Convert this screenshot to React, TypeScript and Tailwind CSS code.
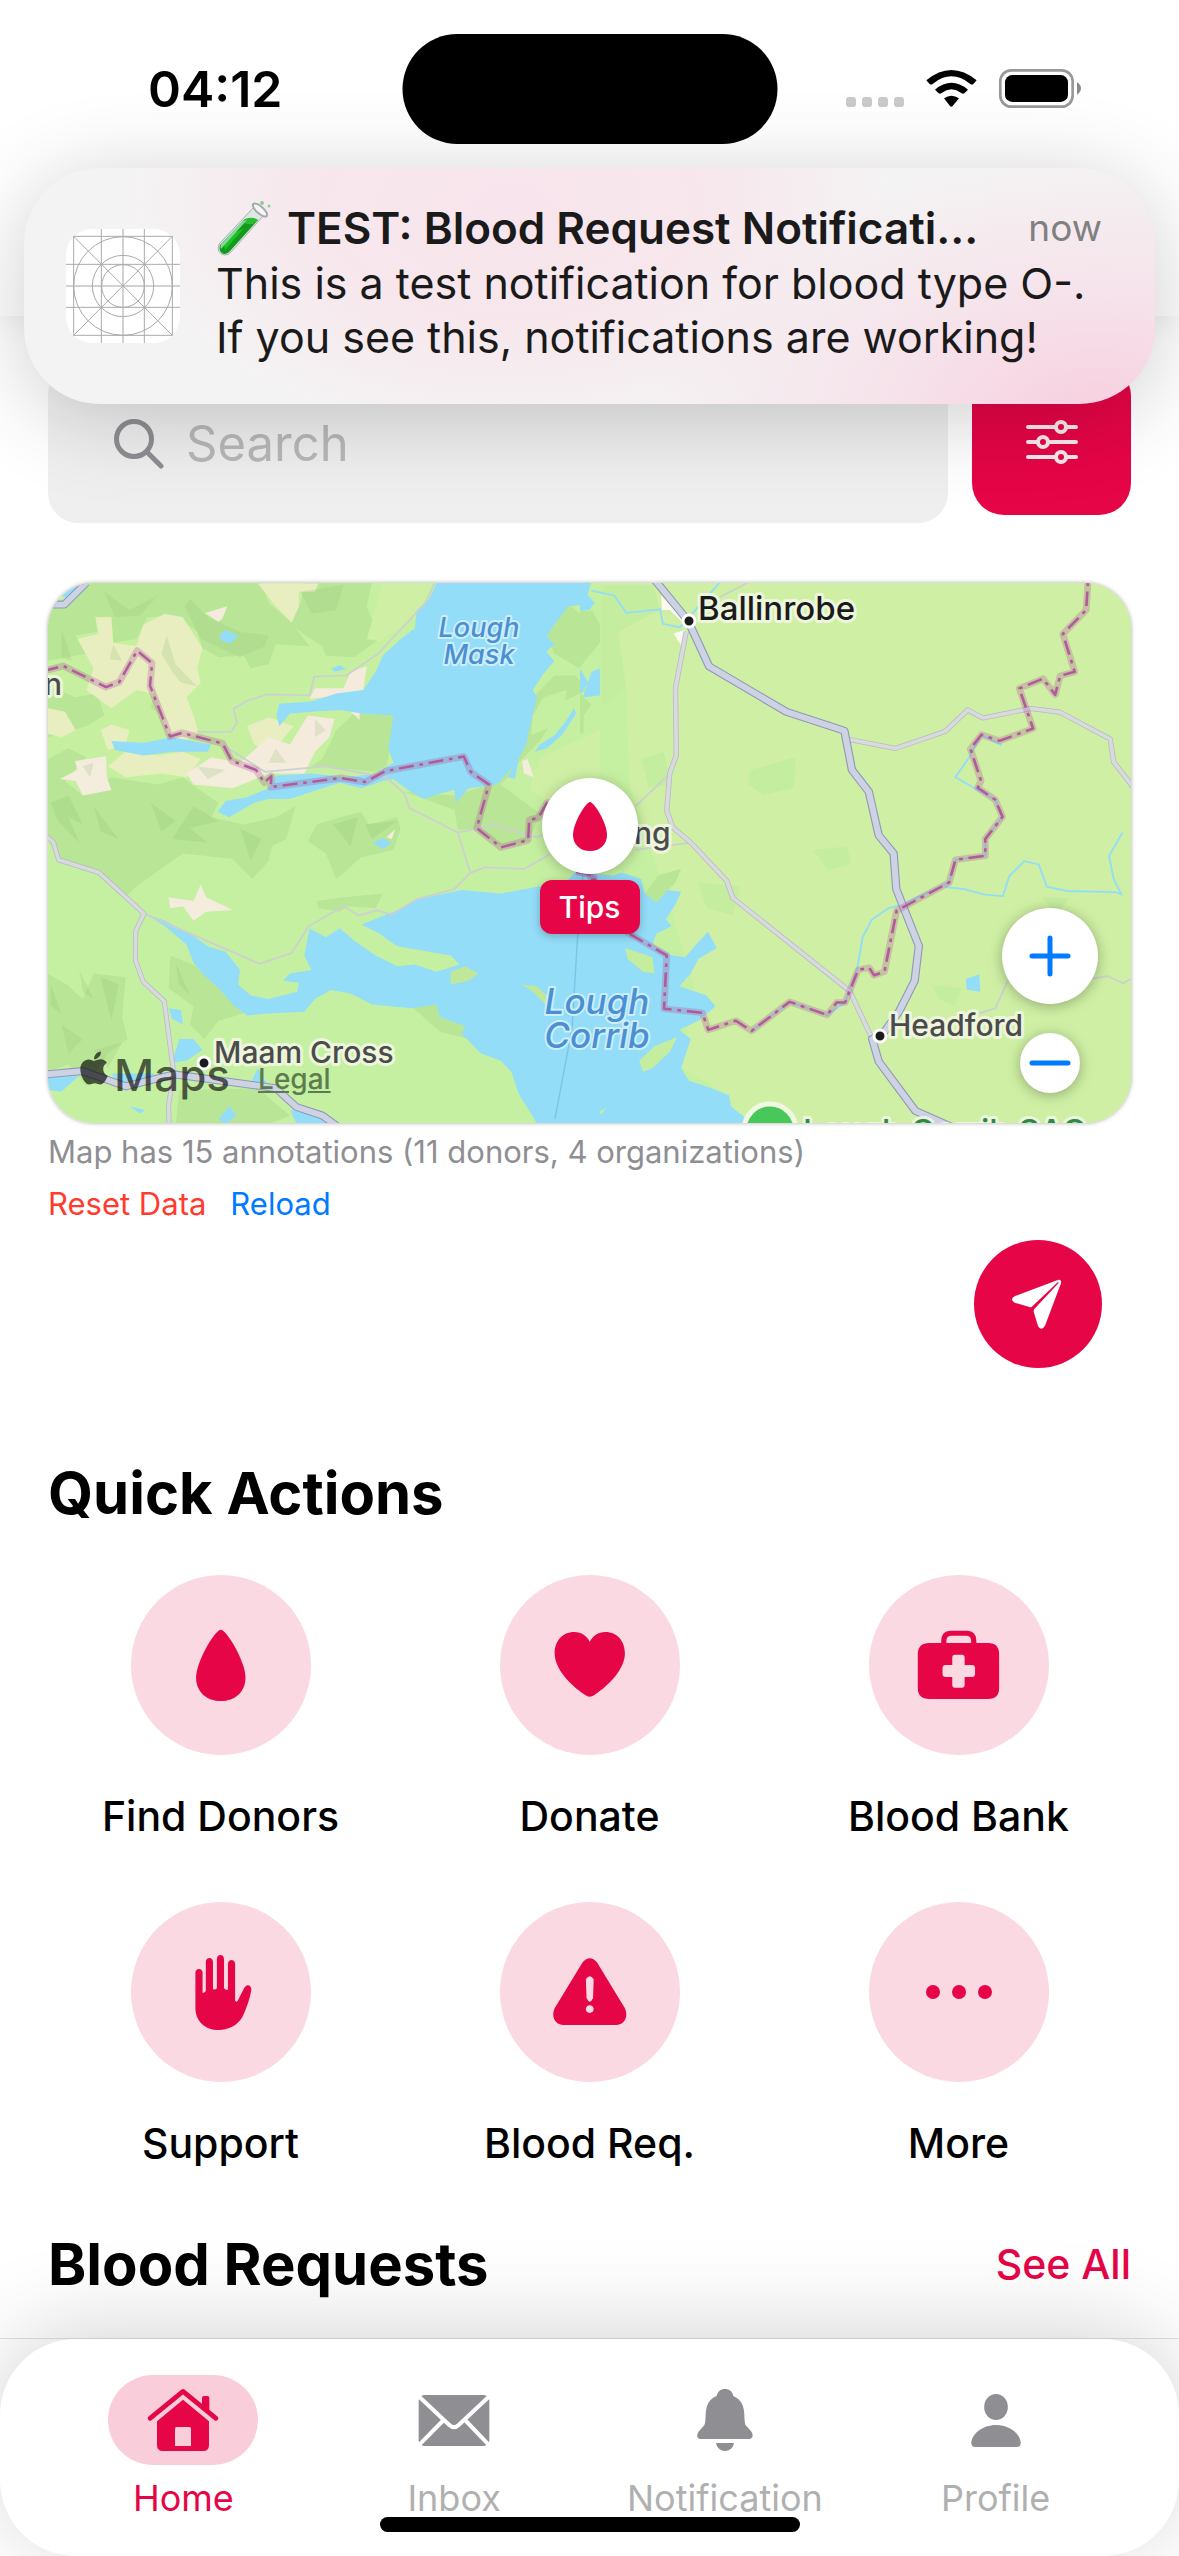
import React from "react";
import { FaApple } from "react-icons/fa";

const BRAND = "#e60547";
const GRAY = "#8e8e93";

function StatusBar() {
  return (
    <div className="relative flex h-[177px] items-center justify-between pr-[97px] pl-[148px]">
      <span className="text-[50px] leading-none font-semibold text-black">04:12</span>
      <div className="absolute top-[34px] left-1/2 h-[110px] w-[375px] -translate-x-1/2 rounded-full bg-black" />
      <svg width="236" height="40" viewBox="846 68 236 40" aria-label="Wi-Fi and battery">
        <g fill="#cacaca">
          <rect x="846" y="96" width="10" height="10" rx="3" />
          <rect x="862" y="96" width="10" height="10" rx="3" />
          <rect x="878" y="96" width="10" height="10" rx="3" />
          <rect x="894" y="96" width="10" height="10" rx="3" />
        </g>
        <g transform="translate(830 55) scale(.3333)">
          <path d="M289 73Q364 11 440 73L430 84Q426 88 420 83Q364 39 309 83Q303 88 299 84Z" />
          <path d="M315 101Q364 60 414 101L404 111Q399 115 394 111Q364 89 335 111Q330 115 325 111Z" />
          <path d="M342 127Q364 112 387 127L368 150Q364 154 360 150Z" />
          <rect x="511" y="43" width="217" height="109" rx="33" fill="none" stroke="#999" strokeWidth="8" />
          <rect x="525" y="57" width="189" height="81" rx="22" />
          <path d="M741 78Q753 86 753 97T741 116Z" fill="#8a8a8a" />
        </g>
      </svg>
    </div>
  );
}

function TestTube() {
  return (
    <svg className="shrink-0" width="55" height="56" viewBox="0 0 55 56" aria-label="Test tube">
      <path d="M39 6L3 44Q0 53 8 55Q12 56 16 51L48 15Z" fill="#dfe7e4" stroke="#a8b2ae" />
      <path d="M29 19L4 45Q2 52 8 54Q12 54 15 50L42 20Z" fill="#139a1d" />
      <path d="M29 19Q37 16 42 20L37 24Q31 25 26 22Z" fill="#2dbb32" />
      <path d="M17 34L8 45L9 50L28 28Z" fill="#19c320" />
      <path d="M27 21L5 44Q4 47 5 49L31 20Z" fill="#8ad39a" />
      <ellipse cx="44" cy="10" rx="9" ry="3.5" transform="rotate(42 44 10)" fill="#f5f7f6" stroke="#a3abab" strokeWidth="2" />
      <circle cx="46" cy="3" r="2" fill="#8ad18f" />
      <circle cx="53" cy="6" r="1.5" fill="#8ad18f" />
    </svg>
  );
}

function AppIcon() {
  return (
    <svg className="shrink-0" width="114" height="114" viewBox="198 207 342 342" aria-hidden="true">
      <rect x="198" y="207" width="342" height="342" rx="78" fill="#fff" />
      <g fill="none" stroke="#d2d2d2" strokeWidth="6">
        <path d="M369 207V549M198 378H540" />
      </g>
      <g fill="none" stroke="#aaa" strokeWidth="3">
        <path d="M304 207V549M433 207V549M198 313H540M198 442H540" />
        <path d="M221 229H517V526H221ZL517 526M517 229L221 526" />
        <circle cx="369" cy="378" r="148" />
        <circle cx="369" cy="378" r="92" />
        <circle cx="369" cy="378" r="64" />
      </g>
    </svg>
  );
}

function NotificationBanner() {
  return (
    <section
      aria-label="Notification"
      className="absolute inset-x-6 top-[168px] z-20 flex h-[236px] items-center rounded-[76px] bg-[#f4f3f4] bg-[radial-gradient(ellipse_34%_100%_at_43%_15%,#f8e4ec_0%,#f7e7ed_50%,transparent_100%),radial-gradient(ellipse_40%_110%_at_95%_105%,#f8cfe0_0%,#f6e2ea_45%,transparent_100%)] pr-[53px] pl-[42px] shadow-[0_12px_90px_rgba(0,0,0,0.2)]"
    >
      <AppIcon />
      <div className="ml-9 min-w-0 flex-1 pb-2 text-[43px] leading-[54px] text-[#1a1a1a]">
        <div className="flex items-center">
          <TestTube />
          <h2 className="ml-4 min-w-0 truncate text-[44px] font-semibold">TEST: Blood Request Notificati...</h2>
          <span className="ml-auto pl-4 text-[37px] text-[#808080]">now</span>
        </div>
        <p className="whitespace-nowrap">This is a test notification for blood type O-.</p>
        <p className="whitespace-nowrap">If you see this, notifications are working!</p>
      </div>
    </section>
  );
}

function SearchRow() {
  return (
    <div className="flex gap-6">
      <label className="flex h-[159px] flex-1 items-center rounded-[30px] bg-[#efefef] pl-[66px]">
        <svg className="shrink-0" width="50" height="50" viewBox="0 0 50 50" fill="none" stroke={GRAY} strokeWidth="5" strokeLinecap="round" aria-hidden="true">
          <circle cx="20" cy="20" r="17.5" />
          <path d="M33 33L47 47" />
        </svg>
        <input
          type="search"
          aria-label="Search"
          placeholder="Search"
          className="ml-[22px] w-full min-w-0 bg-transparent text-[49px] outline-none placeholder:text-[#b8b8ba]"
        />
      </label>
      <button aria-label="Filters" className="flex h-[151px] w-[159px] items-center justify-center rounded-[32px] bg-[#e60547] pt-1">
        <svg width="52" height="44" viewBox="0 0 52 44" fill="none" stroke="#fbe9ee" strokeWidth="4" strokeLinecap="round">
          <path d="M2 7H29M41 7H50M2 22H11M23 22H50M2 37H29M41 37H50" />
          <circle cx="35" cy="7" r="5" />
          <circle cx="17" cy="22" r="5" />
          <circle cx="35" cy="37" r="5" />
        </svg>
      </button>
    </div>
  );
}

function MapDrawing() {
  const borderLeft =
    "M10 278L65 264L185 322L222 308L272 222L314 256L308 318L364 458L397 448L511 477L537 525L605 550L628 585L648 567L646 597L843 572L910 583L968 553L1187 513L1206 555L1257 590L1223 710L1291 763L1367 743L1370 687L1395 682L1420 640L1500 640L1535 830L1560 880";
  const borderRight =
    "M-10 830L35 840L60 930L125 998L227 1060L220 1207L320 1218L336 1265L408 1240L449 1268L549 1188L647 1224L672 1190L694 1190L728 1100L757 1094L770 1115L797 1105L829 937L845 928L966 860L983 797L1061 786L1061 740L1106 679L1087 632L1041 599L1050 580L1022 492L1051 453L1098 470L1186 436L1150 326L1212 299L1244 343L1257 291L1295 280L1264 176L1325 110L1330 30";
  const primaryLeft = "M10 1388L118 1378L240 1420L375 1387L660 1425L718 1477L790 1500L840 1535";
  const primaryRight =
    "M190 20L283 140L338 265L540 390L692 442L712 550L756 610L782 730L821 780L828 878L887 1034L876 1130L835 1215L790 1280L765 1290L782 1352L878 1488L990 1540";
  const secondaryLeft = "M10 725L38 750L52 797L165 832L291 945L268 993L267 1072L289 1132L348 1186L375 1387L360 1470L362 1540";
  const secondaryRight =
    "M278 170L250 325L252 510L235 560L227 662L243 708L290 750L384 855L400 902L706 1158L765 1290M705 466L826 491L956 444L1015 385L1055 407L1180 381L1256 391L1388 465L1397 528L1450 600";
  return (
    <svg className="absolute inset-0 h-full w-full" viewBox="0 0 1083 540" preserveAspectRatio="xMidYMid slice" aria-hidden="true">
      <rect width="1083" height="540" fill="#c6f0a1" />
      <g transform="translate(-8 -13) scale(.3571 .3636)">
        <g fill="#b9e696">
          <path d="M140 30H620L640 90L700 140L755 210L660 205L640 260L590 270L570 235L500 240L455 215L440 170L380 125L300 130L270 190L205 200L200 130L155 130L160 170L100 180L130 230L22 250V110Z" />
          <path d="M740 30H930L915 100L950 190L880 240L800 235L790 210L700 150L730 90Z" />
          <path d="M22 320L100 350L160 340L180 400L130 430L22 460Z" />
          <path d="M22 520L80 490L130 515L70 580L120 620L200 570L330 590L400 570L440 600L500 640L480 680L570 700L660 680L715 650L690 740L650 760L640 800L595 850L540 795L400 780L270 870L240 900L165 830L52 797L22 740Z" />
          <path d="M840 680L900 665L920 700L1000 680L1010 710L990 770L900 790L830 850L800 780L750 745L775 700Z" />
          <path d="M775 910L850 900L960 890L940 930L860 925L840 940L780 930Z" />
          <path d="M22 1110L75 1140L120 1180L150 1110L240 1120L230 1230L245 1290L190 1330L130 1420L80 1360L22 1380Z" />
          <path d="M365 1060L440 1090L530 1180L570 1220L500 1240L460 1290L420 1250L430 1200L360 1150Z" />
          <path d="M390 1430L610 1425L700 1500L640 1525H380Z" />
          <path d="M880 395H995L985 470L970 540L940 555L760 540L790 520L830 440Z" />
          <path d="M1420 180L1480 90L1510 120L1545 110L1568 150V200L1510 270L1440 230Z" />
          <path d="M1380 350L1440 290L1500 290L1530 330L1470 360L1400 470L1340 530L1320 560L1290 590L1400 670L1370 745L1290 763L1223 710L1170 715L1160 660L1020 610L1160 620L1257 590L1360 480Z" />
          <path d="M1040 1200L1115 1195L1120 1230L1190 1255L1200 1290L1120 1270Z" />
        </g>
        <g fill="#e8eec0">
          <path d="M155 130H200L205 200L270 210L290 150L350 120L400 130L455 215L440 270L450 310L410 350L430 400L445 450L400 470L364 458L310 340L270 330L200 380L130 330L150 270L105 190L165 175Z" />
          <path d="M610 37H780L770 60L725 60V100L705 145L660 100Z" />
          <path d="M22 380L70 390L100 440L60 460L22 450Z" />
          <path d="M170 440L200 425L250 440L240 480L190 495Z" />
          <path d="M580 430L640 405L710 430L650 500L600 480Z" />
          <path d="M240 500L330 510L400 500L450 520L410 570L340 560L240 570L190 540Z" />
        </g>
        <path d="M960 37H1100L1050 130L950 195L915 190Z M1568 440L1480 480L1400 520L1370 600L1420 640H1568Z" fill="#cff0a4" />
        <g fill="#f4ecdc">
          <path d="M98 525L185 512L187 570L200 605L120 620L100 580L55 575L105 550Z" />
          <path d="M410 560L480 515L560 530L640 460L700 480L750 400L825 410L810 460L770 500L740 560L640 560L540 600L430 590Z" />
          <path d="M755 355L770 325L850 325L870 280L915 265L905 330L830 345Z" />
          <path d="M360 900L430 910L450 865L465 900L540 935L465 940L430 965L400 925L365 930Z" />
          <path d="M462 118L525 100L510 135L500 142ZM865 385L895 385V412ZM1350 525L1365 520L1383 570L1355 560ZM970 735L995 712L985 740Z" />
        </g>
        <g fill="#8cba72" opacity=".2">
          <path d="M420 80L470 130L560 170L640 180L630 210L560 240L610 265L550 235L450 190L405 100Z" />
          <path d="M180 60L250 110L330 70L280 125L210 130ZM730 60L850 40L830 110L760 120Z" />
          <path d="M60 160L90 250L60 240ZM205 205L230 250L195 245ZM355 180L380 260L440 320L395 310L370 280L340 230ZM320 330L345 400L310 380Z" />
          <path d="M30 640L80 620L120 700L80 680L110 750L50 690ZM150 650L220 740L170 720ZM310 640L380 690L340 720ZM430 650L500 690L420 710L470 750L370 740Z" />
          <path d="M820 700L890 680L870 760ZM910 700L1000 690L930 740ZM560 710L620 740L590 800Z" />
          <path d="M30 1140L60 1220L30 1200ZM110 1100L150 1180L120 1160ZM170 1120L220 1140L200 1240ZM60 1250L120 1290L80 1330ZM380 1080L420 1170L390 1140ZM150 1320L230 1300L190 1370Z" />
          <path d="M120 540L150 530L140 570ZM440 540L520 550L470 575ZM660 490L690 530L640 530ZM770 410L800 440L770 460Z" />
        </g>
        <g fill="#93ddf8">
          <path d="M1113 30H1545L1532 75L1556 92L1480 100L1440 150L1420 182L1440 205L1418 225L1440 250L1410 285L1380 330L1392 350L1380 400L1370 440L1362 480L1340 520L1330 575L1310 570L1325 540L1280 590L1200 600L1165 640L1160 605L1120 615L1075 630L1030 605L990 575L960 580L900 600L840 585L760 610L700 630L640 630L600 640L530 680L497 665L520 635L580 625L640 600L660 565L760 560L860 570L940 560L990 530L975 490L990 400L900 395L840 385L760 390L700 395L670 430L662 400L670 368L760 362L830 340L905 330L940 280L960 235L1010 190L1050 160L1055 110L1090 80Z" />
          <path d="M1385 500L1400 480L1440 455L1470 420L1495 380L1502 395L1460 455L1420 490ZM1545 280L1568 270V345L1520 350Z" />
          <path d="M200 470L290 475L370 460L480 480L470 500L370 500L290 510L210 495Z" />
          <path d="M502 180L520 165L555 182L535 202L508 195ZM815 270L840 262L858 272L825 280ZM932 750L960 738L985 750L960 768Z" />
          <path d="M60 70L80 50L120 40L80 80Z" />
          <path d="M360 1205L395 1210L400 1250L370 1235ZM390 1290L430 1290L455 1320L410 1350L370 1355ZM22 1395L110 1390L60 1435L22 1430ZM500 1510L530 1475L550 1500L520 1525ZM250 1475L295 1485L280 1495ZM200 1385L320 1385L320 1405L220 1410ZM700 1485L790 1500L810 1525H720ZM610 1370L640 1420L590 1410Z" />
          <path d="M1600 840L1500 830L1470 860L1400 870L1290 890L1180 880L1060 905L990 940L900 975L950 1000L1000 1035L1060 1045L1150 1060L1175 1085L1110 1105L1050 1085L1000 1090L940 1060L880 1020L840 985L800 1010L755 985L740 1060L760 1100L700 1110L680 1130L725 1135L720 1160L640 1180L590 1170L555 1140L560 1100L520 1050L470 1035L420 1000L350 965L295 945L350 980L410 1030L430 1080L460 1115L500 1150L545 1200L580 1225L640 1220L740 1215L770 1180L815 1155L870 1165L930 1195L1040 1205L1110 1195L1120 1230L1190 1255L1180 1275L1235 1330L1290 1350L1320 1380L1340 1440L1400 1535H1600Z" />
        </g>
        <path d="M1380 400L1410 350L1475 330L1465 390L1420 435L1375 455Z" fill="#c6f0a1" />
        <path d="M1150 1105L1190 1090L1228 1110L1200 1130L1150 1140ZM1350 1140L1390 1145L1420 1170L1415 1195L1380 1160Z" fill="#bfe999" />
      </g>
      <g transform="translate(532 -13) scale(.382 .3635)">
        <path d="M60 30H1450V1540H430L390 1445L265 1370L300 1150L240 940L130 600L120 300L70 100Z" fill="#cff0a4" />
        <g fill="#c5eda0">
          <path d="M445 550L565 515L560 600L480 620L440 590ZM610 770L700 760L710 810L650 825ZM310 860L420 870L400 950L330 930ZM920 1140L1000 1150L980 1200L940 1180ZM1210 900L1280 900L1250 950ZM160 520L220 500L240 590L180 600Z" />
          <path d="M60 40H190L210 110L100 170L120 320L60 380Z" />
        </g>
        <path d="M205 840L265 822L250 860L200 915L170 890Z" fill="#b9e696" />
        <path d="M0 110L35 115L25 165L0 160ZM0 340L30 370L10 400V450H0Z" fill="#b9e696" />
        <path d="M212 70L250 110H215ZM245 175L275 165L265 208ZM215 90L300 150L285 160Z" fill="#fbfaf0" />
        <g fill="#93ddf8">
          <path d="M0 30H32L15 62L38 90L25 110L0 112ZM0 270L22 310L0 342Z" />
          <path d="M-10 840L60 850L110 832L160 850L170 890L200 915L230 880L265 885L250 920L225 960L240 980L200 1000L190 1030L240 1060L275 1065L300 1035L335 995L358 1040L310 1070L290 1110L260 1145L330 1170L355 1200L310 1240L260 1265L290 1290L265 1370L285 1405L330 1420L390 1445L395 1475L430 1505V1540H-10Z" />
          <path d="M1010 1125L1045 1112L1048 1160L1012 1155Z" />
        </g>
        <path d="M118 1040L190 1065L195 1110L165 1105L125 1070ZM155 1350L195 1310L255 1285L235 1325L190 1370L165 1380ZM50 1490L70 1480L55 1498Z" fill="#c5eda0" />
        <g fill="none" stroke="#93ddf8" strokeWidth="5">
          <path d="M30 57L90 70L121 118L210 108L217 148L262 158L365 35" />
          <path d="M1104 483L1051 453L1022 510L983 570L1041 605L1087 632L1106 679L1061 740V786L983 797L966 860L845 920L808 930L764 962L740 1010L725 1100L694 1190L647 1224L549 1188L449 1268" />
          <path d="M955 872L1005 878L1060 893L1107 897L1124 842L1163 801L1201 810L1222 871L1276 883L1402 886L1417 892L1397 850L1385 787L1420 722" />
        </g>
      </g>
      <g transform="translate(-8 -13) scale(.3571 .3636)" fill="none" strokeLinejoin="round">
        <path
          d="M1105 37L1080 90L945 232L858 290L768 293L755 345L635 342L580 360L542 382L552 420L535 445L440 445M510 480L630 555L798 540L970 570L1020 615L1035 655L1170 722L1272 701L1390 735L1420 725M1170 722L1205 833L1160 878L1056 905L984 947L942 936L892 950L850 925L752 980L705 1053L615 1083L291 945M1205 833L1246 818L1356 822L1440 775"
          stroke="#ccd0cf"
          strokeWidth="5"
        />
        <path d="M1520 840L1506 1000L1490 1260L1442 1510" stroke="#7cc4e8" strokeWidth="4" />
        <path d={secondaryLeft} stroke="#b5b9c4" strokeWidth="14" />
        <path d={secondaryLeft} stroke="#d8dade" strokeWidth="10" />
        <path d={primaryLeft} stroke="#9099bb" strokeWidth="22" />
        <path d={primaryLeft} stroke="#ced3e4" strokeWidth="16" />
        <path d="M22 95H68L130 35" stroke="#9099bb" strokeWidth="22" />
        <path d="M22 95H68L130 35" stroke="#ced3e4" strokeWidth="16" />
        <path d={borderLeft} stroke="#b0579b" strokeOpacity=".3" strokeWidth="19" />
        <path d={borderLeft} stroke="#b25b9b" strokeWidth="7" strokeDasharray="42 16 10 16" />
      </g>
      <g transform="translate(532 -13) scale(.382 .3635)" fill="none" strokeLinejoin="round">
        <path d="M145 650L235 560M145 770L290 750M365 75L440 35M1045 1220L1087 1206L1120 1130M1340 1125L1380 1117L1422 1137L1450 1120" stroke="#ccd0cf" strokeWidth="5" />
        <path d={secondaryRight} stroke="#b5b9c4" strokeWidth="14" />
        <path d={secondaryRight} stroke="#d8dade" strokeWidth="10" />
        <path d={primaryRight} stroke="#9099bb" strokeWidth="22" />
        <path d={primaryRight} stroke="#ced3e4" strokeWidth="16" />
        <path d={borderRight} stroke="#b0579b" strokeOpacity=".3" strokeWidth="18" />
        <path d={borderRight} stroke="#b25b9b" strokeWidth="7" strokeDasharray="40 15 10 15" />
      </g>
      <g stroke="#fff" strokeWidth="3" fill="#1b1b1b">
        <circle cx="641" cy="38" r="6" />
        <circle cx="156" cy="480" r="6" />
        <circle cx="832" cy="453" r="6" />
      </g>
      <circle cx="722" cy="547" r="26" fill="#48c75a" stroke="#f0f8e2" strokeWidth="5" />
      <g stroke="#f2f7e4" strokeOpacity=".9" strokeWidth="6" strokeLinejoin="round" style={{ paintOrder: "stroke" }} fontWeight="500">
        <text x="650" y="37" fontSize="33" fill="#1b1b1b">Ballinrobe</text>
        <text x="166" y="480" fontSize="30" fill="#4b4b4b">Maam Cross</text>
        <text x="841" y="453" fontSize="30" fill="#4b4b4b">Headford</text>
        <text x="586" y="261" fontSize="30" fill="#4b4b4b">ng</text>
        <text x="-4" y="112" fontSize="30" fill="#4b4b4b">n</text>
        <text x="755" y="560" fontSize="33" fill="#2c8a45">Lough Corrib SAC</text>
      </g>
      <g stroke="#cdeefb" strokeWidth="4" strokeLinejoin="round" style={{ paintOrder: "stroke" }} fontStyle="italic" fontWeight="500" textAnchor="middle" fill="#4a90d2">
        <text x="431" y="54" fontSize="27">Lough</text>
        <text x="431" y="81" fontSize="27">Mask</text>
        <text x="549" y="431" fontSize="35">Lough</text>
        <text x="549" y="465" fontSize="35">Corrib</text>
      </g>
    </svg>
  );
}

function MapCard() {
  return (
    <section aria-label="Map" className="relative mt-[60px] h-[540px] overflow-hidden rounded-[46px] shadow-[0_0_4px_rgba(0,0,0,0.35)]">
      <MapDrawing />
      <div className="absolute bottom-5 left-8 flex items-end text-black/65">
        <FaApple className="mb-4 h-[38px] w-[28px]" preserveAspectRatio="none" />
        <span className="ml-1.5 text-[44px] leading-[56px] font-medium">Maps</span>
        <a href="#legal" className="mb-1.5 ml-7 text-[28px] leading-9 font-medium text-[#5c7b4e] underline">Legal</a>
      </div>
      <div className="absolute top-[195px] left-1/2 flex -translate-x-1/2 flex-col items-center">
        <button aria-label="Donor location" className="flex h-24 w-24 items-center justify-center rounded-full bg-white shadow-[0_2px_14px_rgba(0,0,0,0.25)]">
          <svg width="34" height="49" viewBox="178 209 76 214" preserveAspectRatio="none" fill={BRAND}>
            <path d="M216 209C207 209 178 300 178 353C178 395 194 423 216 423S254 395 254 353C254 300 225 209 216 209Z" />
          </svg>
        </button>
        <span className="mt-1.5 flex h-[54px] w-[100px] items-center justify-center rounded-xl bg-[#e60547] text-[30px] font-medium text-white shadow-[0_2px_8px_rgba(0,0,0,0.25)]">Tips</span>
      </div>
      <div className="absolute right-[33px] bottom-[30px] flex flex-col items-center gap-[29px]">
        <button aria-label="Zoom in" className="flex h-24 w-24 items-center justify-center rounded-full bg-white shadow-[0_2px_14px_rgba(0,0,0,0.3)]">
          <svg width="42" height="42" viewBox="0 0 42 42" stroke="#007aff" strokeWidth="5" strokeLinecap="round"><path d="M21 3V39M3 21H39" /></svg>
        </button>
        <button aria-label="Zoom out" className="flex h-[60px] w-[60px] items-center justify-center rounded-full bg-white shadow-[0_2px_14px_rgba(0,0,0,0.3)]">
          <svg width="42" height="6" viewBox="0 0 42 6" stroke="#007aff" strokeWidth="5" strokeLinecap="round"><path d="M3 3H39" /></svg>
        </button>
      </div>
    </section>
  );
}

type Drawing = { label: string; art: React.ReactNode };

const actions: Drawing[] = [
  {
    label: "Find Donors",
    art: (
      <g transform="scale(.6506 .3333) translate(-78 -45)">
        <path d="M216 209C207 209 178 305 178 353C178 395 194 423 216 423S254 395 254 353C254 305 225 209 216 209Z" />
      </g>
    ),
  },
  {
    label: "Donate",
    art: (
      <g transform="scale(.6506 .3333) translate(-646 -45)">
        <path d="M784 246C780 228 771 216 760 216C742 216 730 243 730 280C730 325 753 375 777 405Q784 415 791 405C815 375 838 325 838 280C838 243 826 216 808 216C797 216 788 228 784 246Z" />
      </g>
    ),
  },
  {
    label: "Blood Bank",
    art: (
      <g transform="scale(.6506 .3333) translate(-1213 -45)">
        <path fillRule="evenodd" d="M1324 252V244Q1324 212 1338 212H1364Q1378 212 1378 244V252ZM1332 250H1370V242Q1370 227 1362 227H1340Q1332 227 1332 242Z" />
        <path fillRule="evenodd" d="M1306 249H1396Q1413 249 1413 283V384Q1413 417 1396 417H1306Q1288 417 1288 384V283Q1288 249 1306 249ZM1345 284Q1341 284 1341 293V315H1331Q1326 315 1326 325V341Q1326 351 1331 351H1341V374Q1341 383 1345 383H1356Q1360 383 1360 374V351H1371Q1376 351 1376 341V325Q1376 315 1371 315H1360V293Q1360 284 1356 284Z" />
      </g>
    ),
  },
  {
    label: "Support",
    art: (
      <g transform="scale(.6506 .3333) translate(-78 -66)">
        <path d="M177 278C177 263 188 263 188 278V338Q191 340 193 333V246C193 230 204 230 204 246V327Q207 331 210 325V238C210 221 221 221 221 238V325Q224 331 227 329V252C227 236 238 236 238 252V362Q240 369 242 362L251 328C255 309 263 315 263 328C261 358 254 392 249 412C241 437 228 450 213 450C192 450 177 424 177 383Z" />
      </g>
    ),
  },
  {
    label: "Blood Req.",
    art: (
      <g transform="scale(.6506 .3333) translate(-646 -66)">
        <path fillRule="evenodd" d="M773 247Q784 222 795 247L838 385C844 410 837 435 825 435H743C731 435 724 410 730 385ZM778 298L779 354Q784 376 789 354L790 298Q784 280 778 298ZM784 376C776 376 776 399 784 399S792 376 784 376Z" />
      </g>
    ),
  },
  {
    label: "More",
    art: (
      <>
        <circle cx="64" cy="90" r="7" />
        <circle cx="90" cy="90" r="7" />
        <circle cx="116" cy="90" r="7" />
      </>
    ),
  },
];

const tabs: Drawing[] = [
  {
    label: "Home",
    art: (
      <g fill={BRAND}>
        <path d="M150 160L249 79L348 160" fill="none" stroke={BRAND} strokeWidth="14" strokeLinecap="round" strokeLinejoin="round" />
        <path d="M306 125V99Q306 93 312 93H322Q328 93 328 99V146Z" />
        <path fillRule="evenodd" d="M249 104L327 169V240Q327 258 309 258H189Q171 258 171 240V169ZM230 186Q225 186 225 191V243H273V191Q273 186 268 186Z" />
      </g>
    ),
  },
  {
    label: "Inbox",
    art: (
      <g transform="translate(-814 0)" fill={GRAY}>
        <rect x="957" y="90" width="212" height="153" rx="17" />
        <path d="M957 94L1049 180Q1063 193 1077 180L1169 94M1032 165L960 238M1096 165L1166 238" fill="none" stroke="#fff" strokeWidth="12" />
      </g>
    ),
  },
  {
    label: "Notification",
    art: (
      <g transform="translate(115 0)" fill={GRAY}>
        <path d="M134 72C147 72 156 79 159 93C182 103 191 121 192 149C193 171 193 178 199 184L211 197C221 209 218 222 205 222H62C49 222 47 209 57 197L69 184C75 178 75 171 76 149C77 121 87 101 109 93C112 79 121 72 134 72Z" />
        <path d="M107 234H161C156 266 112 266 107 234Z" />
      </g>
    ),
  },
  {
    label: "Profile",
    art: (
      <g transform="translate(-698 0)" fill={GRAY}>
        <ellipse cx="947" cy="126" rx="35.500" ry="39" />
        <path d="M947 180C988 180 1021 208 1021 234Q1021 246 1009 246H885Q873 246 873 234C873 208 906 180 947 180Z" />
      </g>
    ),
  },
];

function QuickActions() {
  return (
    <section className="mt-[89px]">
      <h2 className="text-[58px] leading-[72px] font-bold text-black">Quick Actions</h2>
      <div className="mt-[46px] grid grid-cols-3 gap-x-6 gap-y-[60px]">
        {actions.map((action) => (
          <button key={action.label} className="flex flex-col items-center">
            <span className="rounded-full bg-[#fad9e3]">
              <svg width="180" height="180" viewBox="0 0 180 180" fill={BRAND} aria-hidden="true">{action.art}</svg>
            </span>
            <span className="mt-[35px] text-[41px] leading-[52px] font-medium text-black">{action.label}</span>
          </button>
        ))}
      </div>
    </section>
  );
}

function TabBar() {
  return (
    <div className="relative z-10 mt-auto border-t border-[#e2e2e2] bg-white">
      <nav aria-label="Main" className="grid grid-cols-4 rounded-[76px] bg-white px-12 pt-9 pb-9 shadow-[0_-10px_90px_rgba(0,0,0,0.17)]">
        {tabs.map((tab, index) => (
          <a key={tab.label} href={`#${tab.label.toLowerCase()}`} aria-current={index === 0 ? "page" : undefined} className="flex flex-col items-center">
            <span className={index === 0 ? "rounded-full bg-[#f9cdd9]" : "rounded-full"}>
              <svg width="150" height="90" viewBox="24 30 450 270" aria-hidden="true">{tab.art}</svg>
            </span>
            <span className={index === 0 ? "mt-[11px] text-[36px] leading-[44px] text-[#e60547]" : "mt-[11px] text-[36px] leading-[44px] text-[#b0b0b0]"}>{tab.label}</span>
          </a>
        ))}
      </nav>
      <div className="absolute bottom-6 left-1/2 h-[15px] w-[420px] -translate-x-1/2 rounded-full bg-black" />
    </div>
  );
}

export default function App() {
  return (
    <div className="relative flex min-h-screen flex-col overflow-hidden bg-white font-['Inter',sans-serif]">
      <header className="h-[316px] bg-white shadow-[0_0_30px_rgba(0,0,0,0.08)]">
        <StatusBar />
      </header>
      <NotificationBanner />
      <main className="px-12 pt-12">
        <SearchRow />
        <MapCard />
        <p className="mt-[9px] text-[31px] leading-10 text-[#8e8e93]">Map has 15 annotations (11 donors, 4 organizations)</p>
        <div className="mt-3 flex gap-6 text-[31px] leading-10">
          <button className="text-[#ff3b30]">Reset Data</button>
          <button className="text-[#007aff]">Reload</button>
        </div>
        <div className="mt-4 flex justify-end pr-[29px]">
          <button aria-label="Send" className="rounded-full bg-[#e60547]">
            <svg width="128" height="128" viewBox="12 12 384 384" fill="#fff">
              <path d="M263 132L135 180Q122 186 128 195L134 200L178 213Q184 215 188 210L264 138Z" />
              <path d="M268 139Q275 130 273 142L225 269Q213 287 204 270L191 227Q190 221 195 217Z" />
              <path d="M263 132Q275 129 273 142L268 144L264 137Z" />
            </svg>
          </button>
        </div>
        <QuickActions />
        <div className="mt-[59px] flex items-center justify-between">
          <h2 className="text-[58px] leading-[72px] font-bold text-black">Blood Requests</h2>
          <a href="#requests" className="text-[41px] leading-[52px] font-medium text-[#e60547]">See All</a>
        </div>
      </main>
      <TabBar />
    </div>
  );
}
